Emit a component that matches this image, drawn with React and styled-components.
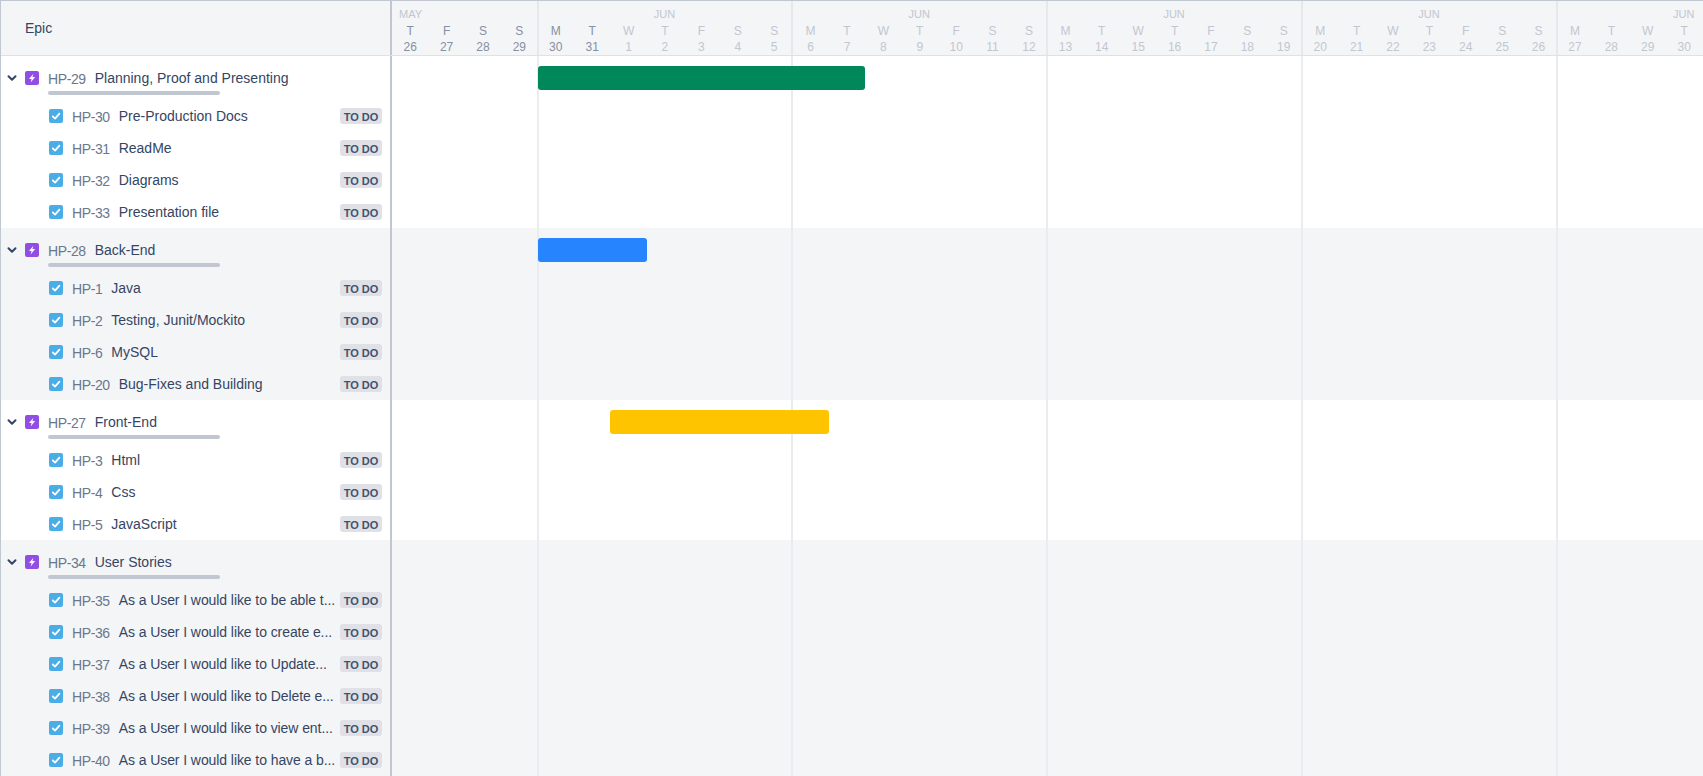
import React from 'react';
import styled, { createGlobalStyle } from 'styled-components';

const DAY = 36.4;
const LETTERS = ['M', 'T', 'W', 'T', 'F', 'S', 'S'];

const GlobalStyle = createGlobalStyle`
    html, body { margin: 0; padding: 0; height: 100%; overflow: hidden; background: #fff; }
    body { font-family: "Liberation Sans", Arial, sans-serif; font-size: 14px; color: #253858; }
    * { box-sizing: border-box; }
`
const Page = styled.div`
    width: 1703px;
    height: 776px;
    overflow: hidden;
    border-top: 1px solid #c1c7d0;
    border-left: 1px solid #c1c7d0;
    display: flex;
    flex-direction: column;
`
const HeaderRow = styled.div`
    display: flex;
    height: 55px;
    flex-shrink: 0;
    background: #f4f5f7;
    border-bottom: 1px solid #dfe1e6;
`
const SideHead = styled.div`
    width: 391px;
    flex-shrink: 0;
    padding-left: 24px;
    display: flex;
    align-items: center;
    border-right: 2px solid #c1c7d0;
    color: #344563;
`
const Calendar = styled.div`
    flex: 1;
    display: flex;
    overflow: hidden;
`
const WeekHead = styled.div`
    flex: 0 0 ${p => p.$days * DAY}px;
    min-width: 0;
    border-right: 1px solid #e6e8ec;
    box-shadow: 1px 0 0 #e6e8ec;
    display: flex;
    flex-direction: column;
`
const Month = styled.div`
    height: 22px;
    padding-top: 6px;
    line-height: 15px;
    font-size: 11px;
    color: #c1c7d0;
    text-align: ${p => (p.$left ? 'left' : 'center')};
    padding-left: ${p => (p.$left ? '7px' : '0')};
`
const Days = styled.div`
    display: flex;
`
const Day = styled.div`
    flex: 0 0 ${DAY}px;
    text-align: center;
    font-size: 12px;
    line-height: 16px;
    color: ${p => (p.$past ? '#8590a2' : '#c1c7d0')};
`
const Section = styled.div`
    display: flex;
    background: ${p => (p.$shaded ? '#f4f5f7' : '#fff')};
`
const SideList = styled.div`
    width: 391px;
    flex-shrink: 0;
    border-right: 2px solid #c1c7d0;
`
const EpicRow = styled.div`
    height: 44px;
    position: relative;
    display: flex;
    align-items: center;
    padding-left: 5px;
`
const EpicIcon = styled.svg`
    width: 14px;
    height: 14px;
    margin-left: 7px;
    flex-shrink: 0;
`
const Chevron = styled.svg`
    width: 12px;
    height: 12px;
    flex-shrink: 0;
`
const Key = styled.span`
    color: #6b778c;
    white-space: nowrap;
    flex-shrink: 0;
    letter-spacing: -0.4px;
    margin: 2px 9px 0;
`
const Title = styled.span`
    flex: 1;
    min-width: 0;
    white-space: nowrap;
    color: #344563;
    letter-spacing: ${p => (p.$long ? '-0.08px' : '0')};
`
const Progress = styled.div`
    position: absolute;
    left: 47px;
    top: 35px;
    width: 172px;
    height: 4px;
    border-radius: 2px;
    background: #c1c7d0;
`
const TaskRow = styled.div`
    height: 32px;
    display: flex;
    align-items: center;
    padding: 0 8px 0 48px;
`
const Check = styled.svg`
    width: 14px;
    height: 14px;
    flex-shrink: 0;
`
const Status = styled.span`
    flex-shrink: 0;
    width: 42px;
    height: 16px;
    line-height: 18px;
    overflow: hidden;
    border-radius: 3px;
    background: #dfe1e6;
    color: #42526e;
    font-size: 11px;
    font-weight: 700;
    text-align: center;
    white-space: nowrap;
`
const Timeline = styled.div`
    flex: 1;
    position: relative;
    overflow: hidden;
`
const GridLines = styled.div`
    position: absolute;
    inset: 0;
    display: flex;
`
const GridWeek = styled.div`
    flex: 0 0 ${p => p.$days * DAY}px;
    border-right: 1px solid #ebecf0;
    box-shadow: 1px 0 0 #ebecf0;
`
const BarRow = styled.div`
    position: relative;
    padding-top: 10px;
    height: 44px;
`
const Bar = styled.div`
    height: 24px;
    border-radius: 3px;
    background: ${p => p.$color};
    margin-left: ${p => p.$start * DAY}px;
    width: ${p => p.$days * DAY}px;
`

const weeks = [
    { month: 'MAY', left: true, offset: 3, span: 4, days: [26, 27, 28, 29] },
    { month: 'JUN', offset: 0, span: 7, days: [30, 31, 1, 2, 3, 4, 5] },
    { month: 'JUN', offset: 0, span: 7, days: [6, 7, 8, 9, 10, 11, 12] },
    { month: 'JUN', offset: 0, span: 7, days: [13, 14, 15, 16, 17, 18, 19] },
    { month: 'JUN', offset: 0, span: 7, days: [20, 21, 22, 23, 24, 25, 26] },
    { month: 'JUN', offset: 0, span: 7, days: [27, 28, 29, 30] },
];
const PAST = 6;

const epics = [
    {
        key: 'HP-29', title: 'Planning, Proof and Presenting', bar: { color: '#00875a', start: 4, days: 9 },
        tasks: [['HP-30', 'Pre-Production Docs'], ['HP-31', 'ReadMe'], ['HP-32', 'Diagrams'], ['HP-33', 'Presentation file']],
    },
    {
        key: 'HP-28', title: 'Back-End', bar: { color: '#2684ff', start: 4, days: 3 },
        tasks: [['HP-1', 'Java'], ['HP-2', 'Testing, Junit/Mockito'], ['HP-6', 'MySQL'], ['HP-20', 'Bug-Fixes and Building']],
    },
    {
        key: 'HP-27', title: 'Front-End', bar: { color: '#ffc400', start: 6, days: 6 },
        tasks: [['HP-3', 'Html'], ['HP-4', 'Css'], ['HP-5', 'JavaScript']],
    },
    {
        key: 'HP-34', title: 'User Stories',
        tasks: [
            ['HP-35', 'As a User I would like to be able t...'],
            ['HP-36', 'As a User I would like to create e...'],
            ['HP-37', 'As a User I would like to Update...'],
            ['HP-38', 'As a User I would like to Delete e...'],
            ['HP-39', 'As a User I would like to view ent...'],
            ['HP-40', 'As a User I would like to have a b...'],
        ],
    },
];

const CheckIcon = () => (
    <Check viewBox="0 0 14 14">
        <rect width="14" height="14" rx="2" fill="#4bade8" />
        <path d="M3.8 7.4L6 9.6l4.4-5" fill="none" stroke="#fff" strokeWidth="1.8" strokeLinecap="round" strokeLinejoin="round" />
    </Check>
);

const BoltIcon = () => (
    <EpicIcon viewBox="0 0 14 14">
        <rect width="14" height="14" rx="2" fill="#904ee2" />
        <path d="M8.4 2.8L4 8h2.6l-1 3.6L10.2 6H7.4z" fill="#fff" />
    </EpicIcon>
);

const ChevronIcon = () => (
    <Chevron viewBox="0 0 12 12">
        <path d="M2.5 4.2L6 7.7l3.5-3.5" fill="none" stroke="#344563" strokeWidth="2" strokeLinecap="round" strokeLinejoin="round" />
    </Chevron>
);

const App = () => {
    let index = 0;
    return (
        <Page>
            <GlobalStyle />
            <HeaderRow>
                <SideHead>Epic</SideHead>
                <Calendar>
                    {weeks.map((w, i) => (
                        <WeekHead key={i} $days={w.span}>
                            <Month $left={w.left}>{w.month}</Month>
                            <Days>
                                {w.days.map((d, j) => {
                                    const n = index++;
                                    return (
                                        <Day key={j} $past={n < PAST}>
                                            {LETTERS[j + w.offset]}<br />{d}
                                        </Day>
                                    );
                                })}
                            </Days>
                        </WeekHead>
                    ))}
                </Calendar>
            </HeaderRow>
            {epics.map((epic, i) => (
                <Section key={epic.key} $shaded={i % 2 === 1}>
                    <SideList>
                        <EpicRow>
                            <ChevronIcon />
                            <BoltIcon />
                            <Key>{epic.key}</Key>
                            <Title>{epic.title}</Title>
                            <Progress />
                        </EpicRow>
                        {epic.tasks.map(([key, title]) => (
                            <TaskRow key={key}>
                                <CheckIcon />
                                <Key>{key}</Key>
                                <Title $long={title.endsWith('...')}>{title}</Title>
                                <Status>TO DO</Status>
                            </TaskRow>
                        ))}
                    </SideList>
                    <Timeline>
                        <GridLines>
                            {weeks.map((w, j) => <GridWeek key={j} $days={w.span} />)}
                        </GridLines>
                        <BarRow>
                            {epic.bar && <Bar $color={epic.bar.color} $start={epic.bar.start} $days={epic.bar.days} />}
                        </BarRow>
                    </Timeline>
                </Section>
            ))}
        </Page>
    );
};

export default App;
